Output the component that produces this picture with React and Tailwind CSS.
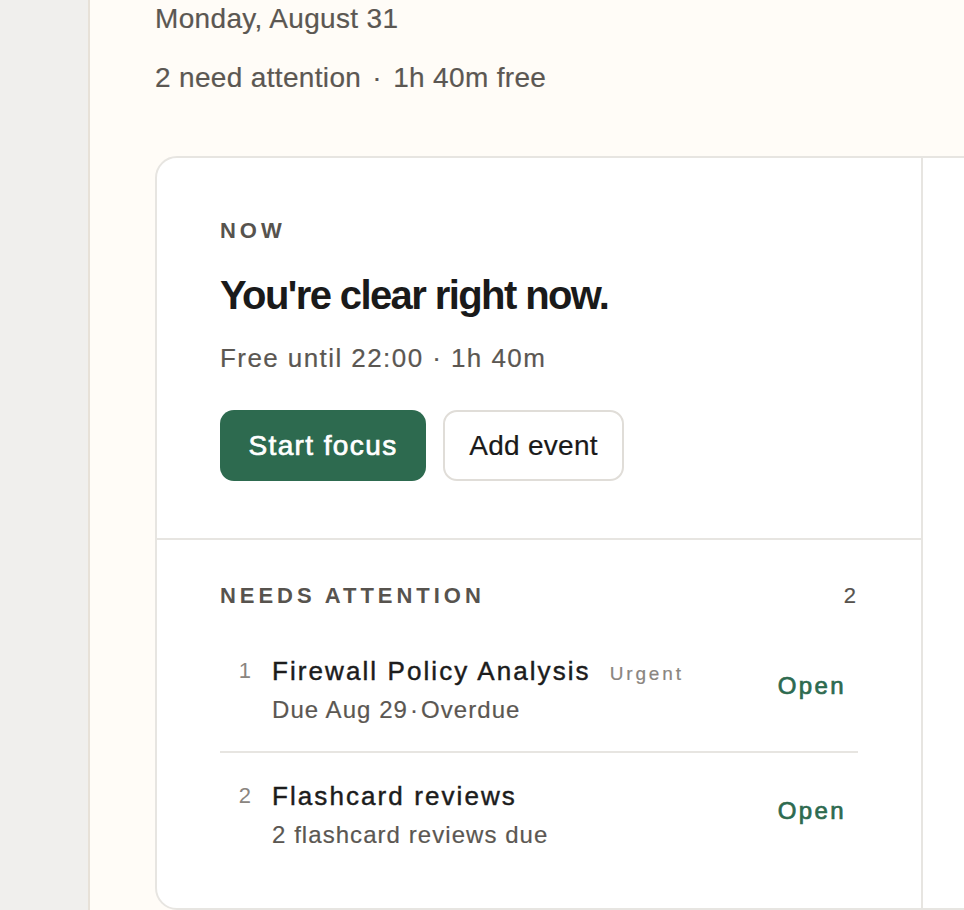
export default function App() {
  const items = [
    { n: 1, title: "Firewall Policy Analysis", tag: "Urgent", sub: ["Due Aug 29", "Overdue"] },
    { n: 2, title: "Flashcard reviews", tag: null, sub: ["2 flashcard reviews due"] },
  ];
  return (
    <div className="flex w-[964px] h-[910px] overflow-hidden bg-[#fffcf7] font-['Liberation_Sans',Arial,sans-serif]">
      <aside className="w-[90px] shrink-0 bg-[#f0efed] border-r-2 border-[#e7e1d8]" />
      <main className="flex-1 min-w-0 pl-[65px] pt-[3px]">
        <div className="text-[28px] leading-[32px] tracking-[0.012em] text-[#5b5752] whitespace-nowrap [-webkit-text-stroke:0.2px_#5b5752]">
          Monday, August 31
        </div>
        <div className="mt-[27px] text-[28px] leading-[32px] tracking-[0.012em] text-[#5b5752] whitespace-nowrap [-webkit-text-stroke:0.2px_#5b5752]">
          2 need attention <span className="mx-[3px]">·</span> 1h 40m free
        </div>

        <div className="mt-[62px] w-[1100px] grid grid-cols-[766px_1fr] bg-white border-2 border-[#e7e5e1] rounded-[22px]">
          <div className="border-r-2 border-[#e7e5e1]">
            <section className="px-[63px] pt-[62px] pb-[57px] border-b-2 border-[#e7e5e1]">
              <div className="text-[22px] leading-[22px] font-bold tracking-[0.18em] text-[#57534e]">NOW</div>
              <h1 className="mt-[29px] text-[40px] leading-[48px] font-bold tracking-[-0.04em] text-[#1a1a1a] whitespace-nowrap">
                You're clear right now.
              </h1>
              <div className="mt-[23px] text-[26px] leading-[32px] tracking-[0.055em] text-[#5b5752] whitespace-nowrap [-webkit-text-stroke:0.2px_#5b5752]">
                Free until 22:00 · 1h 40m
              </div>
              <div className="mt-[36px] flex gap-[17px]">
                <button className="h-[71px] w-[206px] rounded-[14px] bg-[#2d6a4f] text-white text-[28px] tracking-[0.05em] [-webkit-text-stroke:0.7px_#ffffff]">
                  Start focus
                </button>
                <button className="h-[71px] w-[181px] rounded-[14px] bg-white border-2 border-[#e0ddd8] text-[#1a1a1a] text-[28px] tracking-[0.01em] [-webkit-text-stroke:0.2px_#1a1a1a]">
                  Add event
                </button>
              </div>
            </section>

            <section className="px-[63px] pt-[45px] pb-[34px]">
              <div className="flex items-center">
                <div className="text-[22px] leading-[22px] font-bold tracking-[0.18em] text-[#57534e]">NEEDS ATTENTION</div>
                <div className="ml-auto text-[22px] leading-[22px] text-[#57534e] pr-[2px] [-webkit-text-stroke:0.2px_#57534e]">2</div>
              </div>
              <div className="mt-[19px]">
                {items.map((it, i) => (
                  <div
                    key={it.n}
                    className={
                      "flex items-start " +
                      (i === 0 ? "pt-[29px] pb-[26px] border-b-2 border-[#e7e5e1]" : "pt-[27px] pb-[24px]")
                    }
                  >
                    <div className="w-[31px] shrink-0 text-right text-[22px] leading-[32px] text-[#8a8580]">{it.n}</div>
                    <div className="ml-[21px] flex flex-col">
                      <div className="flex items-baseline gap-[19px]">
                        <span className="text-[26px] leading-[32px] tracking-[0.08em] text-[#1c1c1c] whitespace-nowrap [-webkit-text-stroke:0.45px_#1c1c1c]">{it.title}</span>
                        {it.tag && (
                          <span className="text-[19px] leading-[24px] tracking-[0.15em] text-[#8a8580] [-webkit-text-stroke:0.2px_#8a8580]">{it.tag}</span>
                        )}
                      </div>
                      <div className="mt-[8px] text-[24px] leading-[30px] tracking-[0.044em] text-[#5b5752] whitespace-nowrap [-webkit-text-stroke:0.2px_#5b5752]">
                        {it.sub[0]}
                        {it.sub[1] && (
                          <>
                            <span className="mx-[2px]">·</span>
                            {it.sub[1]}
                          </>
                        )}
                      </div>
                    </div>
                    <div className="ml-auto self-center mb-[8px] pr-[12px] text-[24px] leading-[30px] tracking-[0.1em] text-[#2d6a4f] [-webkit-text-stroke:0.7px_#2d6a4f]">
                      Open
                    </div>
                  </div>
                ))}
              </div>
            </section>
          </div>
          <div />
        </div>
      </main>
    </div>
  );
}
